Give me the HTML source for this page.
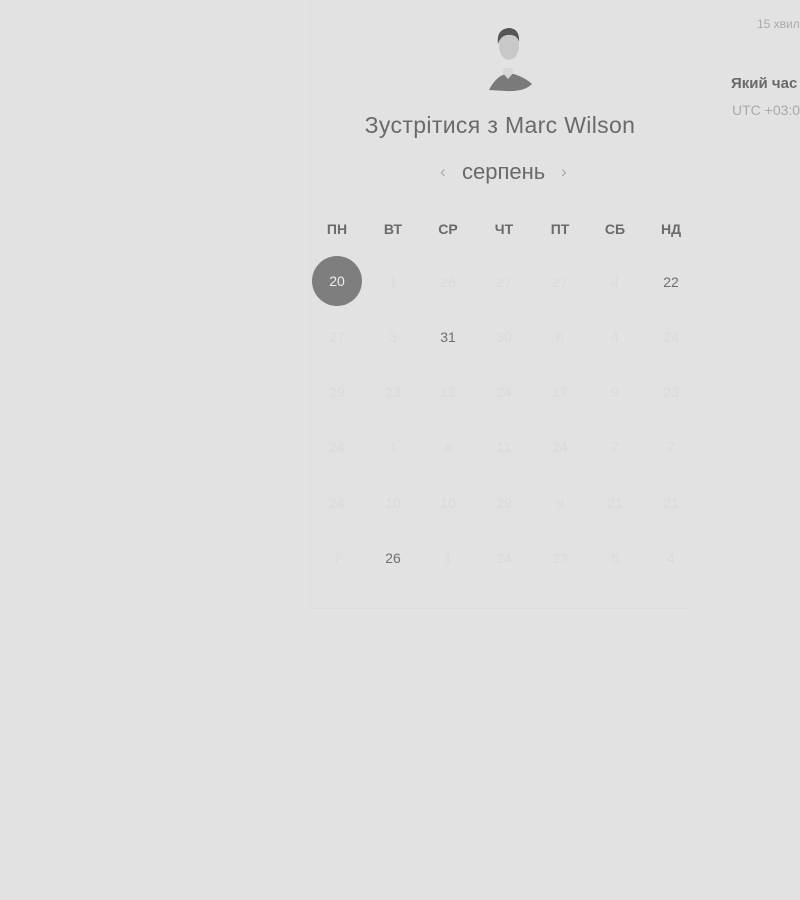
<!DOCTYPE html><html><head><meta charset="utf-8"><style>
body{margin:0;width:800px;height:900px;background:#e2e2e2;font-family:"Liberation Sans",sans-serif;position:relative;overflow:hidden}
.a{position:absolute}
.n{position:absolute;width:50px;margin-left:-25px;text-align:center;font-size:14px;color:#dadada;line-height:16px}
.h{position:absolute;width:50px;margin-left:-25px;text-align:center;font-size:14px;font-weight:bold;color:#6a6a6a}
.d{color:#6e6e6e}
</style></head><body>
<div class="a" style="left:310px;top:0;width:380px;height:608px;border-left:1px solid #dedede;border-bottom:1px solid #dcdcdc"></div>
<svg class="a" style="left:484px;top:24px" width="50" height="68" viewBox="0 0 50 68">
<path d="M5 66 Q12 52 22 50 L30 50 Q42 54 48 60 Q40 68 22 67 Z" fill="#7a7a7a"/>
<path d="M18 48 L24 55 L30 48 L28 44 L20 44Z" fill="#d8d8d8"/>
<ellipse cx="25" cy="22" rx="10" ry="14" fill="#c8c8c8"/>
<path d="M14 20 Q12 6 24 4 Q36 4 35 18 Q33 10 24 11 Q17 11 14 20Z" fill="#555"/>
</svg>
<div class="a" style="left:310px;width:380px;top:112px;text-align:center;font-size:23px;letter-spacing:0.35px;color:#6a6a6a">Зустрітися з Marc Wilson</div>
<div class="a" style="left:440px;top:162px;font-size:17px;color:#aaa">‹</div>
<div class="a" style="left:462px;top:159px;font-size:22px;color:#6a6a6a">серпень</div>
<div class="a" style="left:561px;top:162px;font-size:17px;color:#aaa">›</div>
<div class="a" style="left:757px;top:17px;font-size:12px;color:#aaa;white-space:nowrap">15 хвил</div>
<div class="a" style="left:731px;top:75px;font-size:15px;font-weight:bold;color:#6a6a6a;white-space:nowrap">Який час</div>
<div class="a" style="left:732px;top:102px;font-size:14px;color:#aaa;white-space:nowrap">UTC +03:0</div>
<div class="a" style="left:312px;top:256px;width:50px;height:50px;border-radius:50%;background:#7e7e7e"></div>
<div id="g"></div>
<script>
var xs=[337,393,448,504,560,615,671],ys=[282,337,392,447,503,558];
var hd=["ПН","ВТ","СР","ЧТ","ПТ","СБ","НД"],h="";
hd.forEach((t,i)=>h+='<div class="h" style="left:'+xs[i]+'px;top:221px">'+t+'</div>');
var d=[[20,1,26,27,27,4,22],[27,3,31,30,6,4,24],[29,23,13,24,17,9,23],[24,1,8,11,24,7,7],[24,10,10,29,9,21,21],[7,26,1,24,23,5,4]];
var dark={"0,6":1,"1,2":1,"5,1":1};
d.forEach((r,j)=>r.forEach((v,i)=>{var s=(j==0&&i==0)?' style="left:'+xs[i]+'px;top:'+(ys[j]-9)+'px;color:#eee"':' style="left:'+xs[i]+'px;top:'+(ys[j]-8)+'px"';h+='<div class="n'+(dark[j+","+i]?' d':'')+'"'+s+'>'+v+'</div>'}));
document.getElementById("g").innerHTML=h;
</script>
</body></html>
